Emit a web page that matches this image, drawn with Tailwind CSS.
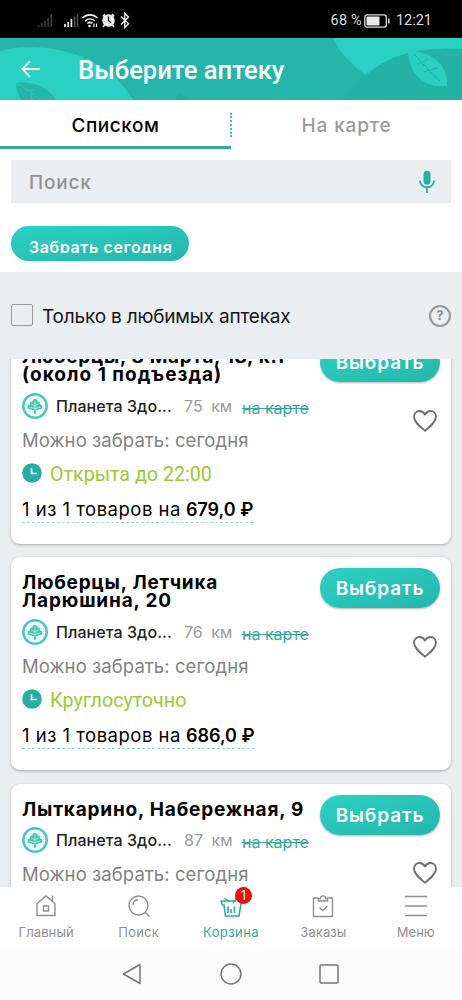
<!DOCTYPE html>
<html lang="ru">
<head>
<meta charset="utf-8">
<title>Выберите аптеку</title>
<script src="https://cdn.jsdelivr.net/npm/@tailwindcss/browser@4"></script>
</head>
<body class="bg-white font-['Inter',sans-serif] text-black">
<svg class="hidden">
  <symbol id="logo" viewBox="0 0 26 26">
    <circle cx="13" cy="13" r="11.700" fill="#fff" stroke="#41cbb9" stroke-width="2.500"/>
    <circle cx="13" cy="13" r="8.800" fill="#eefaf8"/>
    <path d="M13 6c2.200 0 2.700 1.500 2.400 2.500 2.200-.2 3.400 1.300 2.700 2.900 2.200.2 3 2.200 2 3.700-.9 1.400-2.500 1.500-3.500 1.200-.7 1.300-2.200 1.300-2.900.6l.6 3.600h-2.600l.6-3.600c-.7.700-2.200.7-2.900-.6-1 .300-2.600.2-3.500-1.200-1-1.500-.2-3.500 2-3.700-.7-1.600.5-3.100 2.700-2.900-.3-1 .2-2.500 2.400-2.500z" fill="#41c4b4"/>
    <path d="M13 7.500v10M9 10.500l4 2.500 4-2.500M7.500 14l5.500 1.500 5.500-1.500" fill="none" stroke="#e2f8f4" stroke-width=".7"/>
  </symbol>
  <symbol id="heart" viewBox="0 0 26 24">
    <path d="M13 21.700C8 17.500 2 13 2 7.700 2 4.300 4.500 2 7.400 2c2.300 0 4.300 1.200 5.600 3.400C14.300 3.200 16.300 2 18.600 2 21.500 2 24 4.300 24 7.700c0 5.300-6 9.800-11 14z" fill="none" stroke="#6f6f6f" stroke-width="1.900" stroke-linejoin="round"/>
  </symbol>
  <symbol id="clock" viewBox="0 0 20 20">
    <circle cx="10" cy="10" r="9.800" fill="#26aea3"/>
    <path d="M9.500 5.200v5.300h5.300" fill="none" stroke="#fff" stroke-width="1.700"/>
  </symbol>
</svg>

<div class="flex h-[1000px] w-[462px] flex-col overflow-hidden">
  <!-- Status bar -->
  <div class="flex h-[38px] shrink-0 items-center justify-between bg-black pr-[30px] pl-[37px] pt-0.5">
    <svg class="h-[18px] w-[95px]" viewBox="37 10 95 18" fill="none">
      <g stroke="#444" stroke-width="1.500"><path d="M38.500 26v-2M41.700 26v-4M44.900 26v-6M48.100 26v-9M51.300 26V13"/></g>
      <g stroke="#eee" stroke-width="1.700"><path d="M65 26v-3M68.200 26v-5M71.400 26v-8"/></g>
      <path d="M74.600 26V15.500M77.500 26V13" stroke="#555" stroke-width="1.500"/>
      <g stroke="#eee" stroke-width="1.600"><path d="M82.500 17c4.500-4.200 10.500-4.200 15 0M85 20c3-2.700 7-2.700 10 0M87.300 22.500c1.800-1.500 3.600-1.500 5.200-.2"/></g>
      <circle cx="89.500" cy="25" r="1.300" fill="#eee"/><path d="M94 22.500v3.500M96.500 22.500v3.500" stroke="#eee" stroke-width="1.200"/>
      <circle cx="108.500" cy="19.500" r="6.200" fill="#eee"/><path d="M103 15.500l2-2.300M114 15.500l-2-2.300M104.500 24l-1.500 2M112.500 24l1.500 2" stroke="#eee" stroke-width="1.800"/><path d="M108.500 15.500v4.300l2.500 2" stroke="#000" stroke-width="1.300"/>
      <path d="M121 15.500l7.500 7.300-3.700 3.700v-14l3.700 3.500-7.500 7.500" stroke="#eee" stroke-width="1.400"/>
    </svg>
    <div class="flex items-center pt-px font-['Roboto',sans-serif] text-[14.500px] text-[#dedede]">
      <span class="tracking-[0.2px]">68 %</span>
      <svg class="mr-[6px] ml-[2px] h-[14px] w-[26px]" viewBox="0 0 26 14"><rect x=".8" y=".8" width="21.500" height="12.400" rx="2.500" fill="none" stroke="#ddd" stroke-width="1.300"/><rect x="2.500" y="2.500" width="13" height="9" rx="1" fill="#e8e8e8"/><path d="M24.800 4.500v5" stroke="#ddd" stroke-width="1.500"/></svg>
      <span>12:21</span>
    </div>
  </div>

  <!-- App header -->
  <header class="relative h-[62px] shrink-0 bg-[#25b6aa]">
    <svg class="absolute inset-0 h-[62px] w-[462px]" viewBox="0 38 462 62">
      <path d="M0 51Q13 47 27 47C72 47 112 64 133 100H0z" fill="#2bd0c5"/>
      <path d="M16 83c15-2 30 2 40 17H21c-3-6-5-11-5-17z" fill="#25b6aa"/>
      <path d="M16 83c9 5 17 10 24 17M27 90l8 0M31 93l1 6" stroke="#2bc6bb" stroke-width="1" fill="none"/>
      <path d="M176 100q0-6 2-7 7 2 13 7z" fill="#24ada2"/>
      <path d="M333 38Q345 62 366 75Q385 59 408 53Q430 48 462 49V38z" fill="#2bd0c5"/>
      <path d="M341 100Q351 87 366 75Q385 59 408 53Q430 48 462 49V100z" fill="#24b2a6"/>
      <path d="M408 51c7-2 12 3 18 3 16 7 22 18 21 32-21 2-38-10-39-35z" fill="#2bcec2"/>
      <path d="M414 54c9 10 18 20 26 27M422 62l6-3M422 62l-4 2M430 70l7-2M430 70l-6 2" stroke="#24ada2" stroke-width="1" fill="none"/>
    </svg>
    <div class="relative flex h-full items-center pl-[21px]">
      <svg class="h-5 w-5" viewBox="0 0 20 20" fill="none" stroke="#fff" stroke-width="1.800"><path d="M18.500 10H2M9 2.200L1.500 10 9 17.800"/></svg>
      <h1 class="ml-[37px] pt-[2px] font-['Roboto',sans-serif] text-[25.600px] font-medium text-white">Выберите аптеку</h1>
    </div>
  </header>

  <!-- Tabs -->
  <div class="flex h-[49px] shrink-0 text-[19px] font-medium">
    <div class="flex w-[231px] items-center justify-center border-b-[3px] border-[#35a897] pt-[6px]"><span class="tracking-[0.550px]">Списком</span></div>
    <div class="relative flex w-[231px] items-center justify-center pt-[4px] text-[#9b9b9b]">
      <span class="tracking-[0.850px]">На карте</span>
      <span class="absolute top-[13px] left-[-1px] h-[24px] border-l-2 border-dotted border-[#35c4ba]"></span>
    </div>
  </div>

  <!-- Search -->
  <div class="h-[123px] shrink-0 px-[11px] pt-[11px]">
    <div class="flex h-[43px] items-center justify-between bg-[#ebeef1] pr-[16px] pl-[18px]">
      <span class="pt-[3px] text-[19px] font-medium tracking-[0.8px] text-[#929292]">Поиск</span>
      <svg class="h-[24px] w-[16px]" viewBox="0 0 16 24"><rect x="4.500" y=".8" width="7" height="14" rx="3.500" fill="#26b19f"/><path d="M1 10.500c0 9 14 9 14 0M8 17.500V23" fill="none" stroke="#26b19f" stroke-width="1.800"/></svg>
    </div>
    <div class="mt-[23px] h-[35px] w-[178px] rounded-full bg-linear-to-br from-[#2bd1c5] to-[#25b7ab] pt-[9px] pl-[18px]">
      <div class="h-[18px] overflow-hidden text-[16px] leading-[24px] font-semibold whitespace-nowrap text-white"><span class="tracking-[0.6px]">Забрать сегодня</span></div>
    </div>
  </div>

  <main class="flex min-h-0 flex-1 flex-col bg-[#ebeef1]">
    <div class="flex h-[87px] shrink-0 items-center px-[11px]">
      <span class="mb-px h-[22px] w-[22px] rounded-[2px] border border-[#9a9a9a]"></span>
      <span class="ml-[9px] pt-[4px] text-[19px] tracking-[-0.190px] text-[#151515]">Только в любимых аптеках</span>
      <span class="ml-auto flex h-[22px] w-[22px] items-center justify-center rounded-full border-2 border-[#979797] text-[13px] font-bold text-[#8c8c8c]">?</span>
    </div>

    <div class="min-h-0 flex-1 overflow-hidden px-[11px]">
      <div class="-mt-[28px] flex flex-col gap-[13px]">
        <article class="flex h-[213px] shrink-0 rounded-[9px] bg-white pl-[11px] shadow-[0_1px_3px_rgba(0,0,0,0.3)]">
          <div class="w-[298px] shrink-0 pt-[17px]">
            <h2 class="text-[19px] leading-[18px] font-bold whitespace-nowrap"><span class="tracking-[0.650px]">Люберцы, 8 Марта, 18, к.1</span><br><span class="tracking-[1px]">(около 1 подъезда)</span></h2>
            <div class="mt-[8px] flex h-[27px] items-center whitespace-nowrap">
              <svg class="h-[26px] w-[26px]"><use href="#logo"/></svg>
              <span class="ml-[8px] w-[128px] pt-px text-[16px] font-medium tracking-[0.080px] text-[#222]">Планета Здо...</span>
              <span class="w-[58px] pt-px text-[16px] text-[#9b9b9b] [word-spacing:4px]">75 км</span>
              <span class="pt-[4px] text-[16px] text-[#35a897] line-through">на карте</span>
            </div>
            <p class="mt-[9px] h-[24px] text-[18.500px] leading-[24px] tracking-[0.080px] text-[#828282]">Можно забрать: сегодня</p>
            <div class="mt-[9px] flex h-[24px] items-center"><svg class="h-[20px] w-[20px]"><use href="#clock"/></svg><span class="ml-[8px] pt-[3px] font-['Roboto',sans-serif] text-[19.700px] text-[#98cb35]">Открыта до 22:00</span></div>
            <p class="mt-[12px] w-fit border-b border-dashed border-[#9edbd0] text-[18.500px] leading-[25px] whitespace-nowrap"><span class="tracking-[0.500px]">1 из 1 товаров на</span><b class="ml-[5px] text-[18px] font-semibold">679,0 ₽</b></p>
          </div>
          <div class="flex w-[120px] flex-col items-end pt-[11px]">
            <button class="h-[40px] w-[120px] rounded-full bg-linear-to-br from-[#2bd1c5] to-[#25b7ab] pt-[2px] text-[19px] font-semibold text-white shadow-[0_1px_2px_rgba(0,0,0,0.3)]"><span class="tracking-[0.900px]">Выбрать</span></button>
            <svg class="mt-[27px] mr-[2px] h-[24px] w-[26px]"><use href="#heart"/></svg>
          </div>
        </article>

        <article class="flex h-[213px] shrink-0 rounded-[9px] bg-white pl-[11px] shadow-[0_1px_3px_rgba(0,0,0,0.3)]">
          <div class="w-[298px] shrink-0 pt-[17px]">
            <h2 class="text-[19px] leading-[18px] font-bold whitespace-nowrap"><span class="tracking-[0.750px]">Люберцы, Летчика</span><br><span class="tracking-[0.850px]">Ларюшина, 20</span></h2>
            <div class="mt-[8px] flex h-[27px] items-center whitespace-nowrap">
              <svg class="h-[26px] w-[26px]"><use href="#logo"/></svg>
              <span class="ml-[8px] w-[128px] pt-px text-[16px] font-medium tracking-[0.080px] text-[#222]">Планета Здо...</span>
              <span class="w-[58px] pt-px text-[16px] text-[#9b9b9b] [word-spacing:4px]">76 км</span>
              <span class="pt-[4px] text-[16px] text-[#35a897] line-through">на карте</span>
            </div>
            <p class="mt-[9px] h-[24px] text-[18.500px] leading-[24px] tracking-[0.080px] text-[#828282]">Можно забрать: сегодня</p>
            <div class="mt-[9px] flex h-[24px] items-center"><svg class="h-[20px] w-[20px]"><use href="#clock"/></svg><span class="ml-[8px] pt-[3px] font-['Roboto',sans-serif] text-[19.700px] text-[#98cb35]">Круглосуточно</span></div>
            <p class="mt-[12px] w-fit border-b border-dashed border-[#9edbd0] text-[18.500px] leading-[25px] whitespace-nowrap"><span class="tracking-[0.500px]">1 из 1 товаров на</span><b class="ml-[5px] text-[18px] font-semibold">686,0 ₽</b></p>
          </div>
          <div class="flex w-[120px] flex-col items-end pt-[11px]">
            <button class="h-[40px] w-[120px] rounded-full bg-linear-to-br from-[#2bd1c5] to-[#25b7ab] pt-[2px] text-[19px] font-semibold text-white shadow-[0_1px_2px_rgba(0,0,0,0.3)]"><span class="tracking-[0.900px]">Выбрать</span></button>
            <svg class="mt-[27px] mr-[2px] h-[24px] w-[26px]"><use href="#heart"/></svg>
          </div>
        </article>

        <article class="mt-px flex h-[195px] shrink-0 rounded-[9px] bg-white pl-[11px] shadow-[0_1px_3px_rgba(0,0,0,0.3)]">
          <div class="w-[298px] shrink-0 pt-[17px]">
            <h2 class="text-[19px] leading-[18px] font-bold whitespace-nowrap"><span class="tracking-[0.800px]">Лыткарино, Набережная, 9</span></h2>
            <div class="mt-[7px] flex h-[27px] items-center whitespace-nowrap">
              <svg class="h-[26px] w-[26px]"><use href="#logo"/></svg>
              <span class="ml-[8px] w-[128px] pt-px text-[16px] font-medium tracking-[0.080px] text-[#222]">Планета Здо...</span>
              <span class="w-[58px] pt-px text-[16px] text-[#9b9b9b] [word-spacing:4px]">87 км</span>
              <span class="pt-[4px] text-[16px] text-[#35a897] line-through">на карте</span>
            </div>
            <p class="mt-[9px] h-[24px] text-[18.500px] leading-[24px] tracking-[0.080px] text-[#828282]">Можно забрать: сегодня</p>
          </div>
          <div class="flex w-[120px] flex-col items-end pt-[11px]">
            <button class="h-[40px] w-[120px] rounded-full bg-linear-to-br from-[#2bd1c5] to-[#25b7ab] pt-[2px] text-[19px] font-semibold text-white shadow-[0_1px_2px_rgba(0,0,0,0.3)]"><span class="tracking-[0.900px]">Выбрать</span></button>
            <svg class="mt-[26px] mr-[2px] h-[24px] w-[26px]"><use href="#heart"/></svg>
          </div>
        </article>
      </div>
    </div>
  </main>

  <!-- Bottom navigation -->
  <nav class="grid h-[61px] shrink-0 grid-cols-5 bg-white text-[13px] text-[#8f8f8f]">
    <div class="flex flex-col items-center pt-[7px]">
      <svg class="h-[24px] w-[24px]" viewBox="0 0 24 24" fill="none" stroke="#8f8f8f" stroke-width="1.400"><path d="M3 9.500V21.500H21V9.500L12 2zM18.500 7V1.500M9.500 12h5v5h-5z"/></svg>
      <span class="mt-[5px] leading-[18px] tracking-[0.1px]">Главный</span>
    </div>
    <div class="flex flex-col items-center pt-[7px]">
      <svg class="h-[24px] w-[24px]" viewBox="0 0 24 24" fill="none" stroke="#8f8f8f" stroke-width="1.400"><circle cx="11.500" cy="11.500" r="9.500"/><path d="M18 18.500l4.500 4M6 11c0-3 2-5 5-5.200"/></svg>
      <span class="mt-[5px] leading-[18px] tracking-[0.2px]">Поиск</span>
    </div>
    <div class="relative flex flex-col items-center pt-[7px] text-[#2bae9e]">
      <svg class="h-[24px] w-[24px]" viewBox="0 0 24 24" fill="none" stroke="#2bae9e" stroke-width="1.600"><path d="M1.500 7h15.500M2 7l1.500 4h1.500l1.500 11h13.500L22 9M5.500 4l5 4M14 9l4-5M9 12.500v6.500M12 15v4M15.500 12.500v6.500"/></svg>
      <span class="mt-[5px] leading-[18px] tracking-[0.4px]">Корзина</span>
      <span class="absolute top-0 left-[50px] flex h-[17px] w-[17px] items-center justify-center rounded-full bg-[#f00c0c] text-[13px] text-white">1</span>
    </div>
    <div class="flex flex-col items-center pt-[7px]">
      <svg class="h-[24px] w-[24px]" viewBox="0 0 24 24" fill="none" stroke="#8f8f8f" stroke-width="1.400"><path d="M7.500 4H2.500V22.500h19V4h-5M7.500 7V4.500h2C9.500 1 14.500 1 14.500 4.500h2V7zM8.500 13.500l3 3 5-4.500"/></svg>
      <span class="mt-[5px] leading-[18px] tracking-[0.1px]">Заказы</span>
    </div>
    <div class="flex flex-col items-center pt-[7px]">
      <svg class="h-[24px] w-[24px]" viewBox="0 0 24 24" stroke="#8f8f8f" stroke-width="1.500"><path d="M1 2.500h22M1 12h22M1 21.500h22"/></svg>
      <span class="mt-[5px] leading-[18px]">Меню</span>
    </div>
  </nav>

  <!-- System navigation -->
  <div class="flex h-[52px] shrink-0 items-center justify-between bg-[#fbfbfb] px-[121px]">
    <svg class="h-[24px] w-[22px]" viewBox="0 0 22 24" fill="none" stroke="#777" stroke-width="1.500" stroke-linejoin="round"><path d="M19 2.500v19L2.500 12z"/></svg>
    <svg class="ml-[2px] h-[24px] w-[24px]" viewBox="0 0 24 24" fill="none" stroke="#777" stroke-width="1.500"><circle cx="12" cy="12" r="10"/></svg>
    <svg class="h-[24px] w-[24px]" viewBox="0 0 24 24" fill="none" stroke="#777" stroke-width="1.500"><rect x="3" y="3" width="18" height="18" rx="1"/></svg>
  </div>
</div>
</body>
</html>
